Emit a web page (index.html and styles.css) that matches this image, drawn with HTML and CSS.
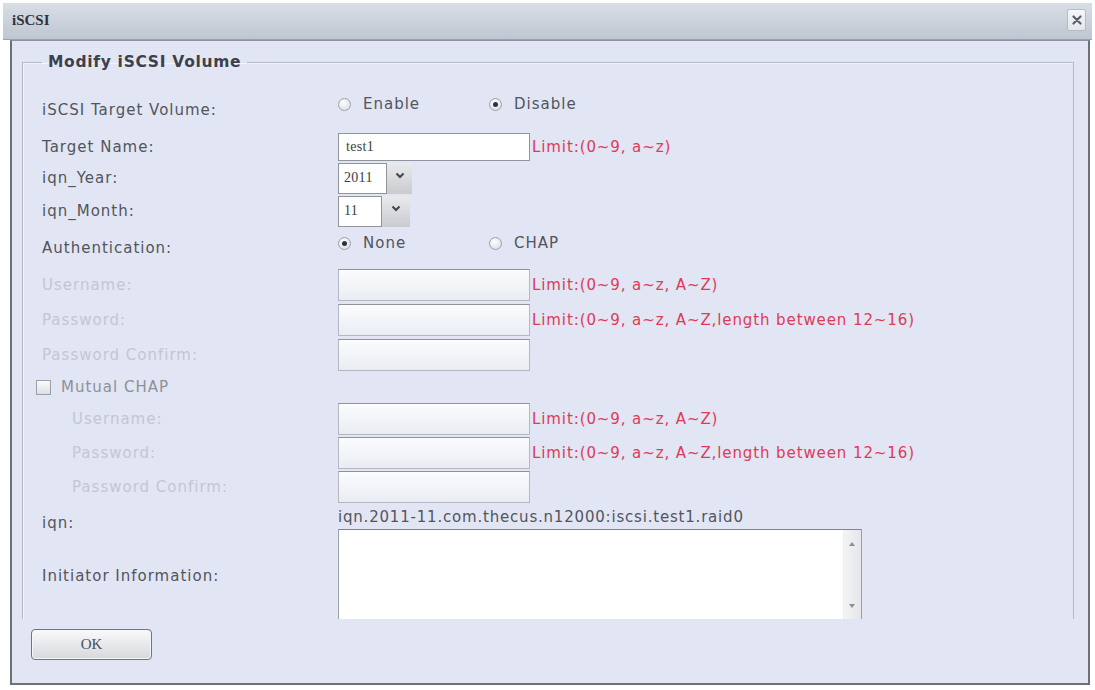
FILE: index.html
```html
<!DOCTYPE html>
<html lang="en">
<head>
    <meta charset="UTF-8">
    <title>iSCSI</title>
    <link rel="stylesheet" href="styles.css">
</head>
<body>
    <div class="window">
        <div class="titlebar">
            <span class="title">iSCSI</span>
            <span class="close">
                <svg width="10" height="10" viewBox="0 0 10 10"><path d="M1.5 1.5 L8.5 8.5 M8.5 1.5 L1.5 8.5" stroke="#5a5f68" stroke-width="2.2" stroke-linecap="round"/></svg>
            </span>
        </div>
        <div class="panel">
            <div class="scroll">
                <fieldset class="group">
                    <legend>Modify iSCSI Volume</legend>

                    <div class="row r-vol">
                        <div class="label">iSCSI Target Volume:</div>
                        <div class="control radios">
                            <span class="radio"><i class="dot"></i>Enable</span>
                            <span class="radio"><i class="dot on"></i>Disable</span>
                        </div>
                    </div>

                    <div class="row r-name">
                        <div class="label">Target Name:</div>
                        <div class="control">
                            <span class="input active">test1</span>
                            <span class="limit">Limit:(0~9, a~z)</span>
                        </div>
                    </div>

                    <div class="row r-year">
                        <div class="label">iqn_Year:</div>
                        <div class="control">
                            <span class="select"><span class="value year">2011</span><span class="drop"><svg width="10" height="7" viewBox="0 0 10 7"><path d="M1.5 1.5 L5 5 L8.5 1.5" fill="none" stroke="#444" stroke-width="2"/></svg></span></span>
                        </div>
                    </div>

                    <div class="row r-month">
                        <div class="label">iqn_Month:</div>
                        <div class="control">
                            <span class="select"><span class="value month">11</span><span class="drop wide"><svg width="10" height="7" viewBox="0 0 10 7"><path d="M1.5 1.5 L5 5 L8.5 1.5" fill="none" stroke="#444" stroke-width="2"/></svg></span></span>
                        </div>
                    </div>

                    <div class="row r-auth">
                        <div class="label">Authentication:</div>
                        <div class="control radios">
                            <span class="radio"><i class="dot on"></i>None</span>
                            <span class="radio"><i class="dot"></i>CHAP</span>
                        </div>
                    </div>

                    <div class="row r-field">
                        <div class="label off">Username:</div>
                        <div class="control">
                            <span class="input"></span>
                            <span class="limit">Limit:(0~9, a~z, A~Z)</span>
                        </div>
                    </div>

                    <div class="row r-field tall">
                        <div class="label off">Password:</div>
                        <div class="control">
                            <span class="input"></span>
                            <span class="limit">Limit:(0~9, a~z, A~Z,length between 12~16)</span>
                        </div>
                    </div>

                    <div class="row r-field">
                        <div class="label off">Password Confirm:</div>
                        <div class="control">
                            <span class="input"></span>
                        </div>
                    </div>

                    <div class="row r-mutual">
                        <span class="check"></span>
                        <span class="check-label">Mutual CHAP</span>
                    </div>

                    <div class="row r-field">
                        <div class="label off sub">Username:</div>
                        <div class="control">
                            <span class="input"></span>
                            <span class="limit">Limit:(0~9, a~z, A~Z)</span>
                        </div>
                    </div>

                    <div class="row r-field">
                        <div class="label off sub">Password:</div>
                        <div class="control">
                            <span class="input"></span>
                            <span class="limit">Limit:(0~9, a~z, A~Z,length between 12~16)</span>
                        </div>
                    </div>

                    <div class="row r-field">
                        <div class="label off sub">Password Confirm:</div>
                        <div class="control">
                            <span class="input"></span>
                        </div>
                    </div>

                    <div class="row r-iqn">
                        <div class="label">iqn:</div>
                        <div class="control iqn">iqn.2011-11.com.thecus.n12000:iscsi.test1.raid0</div>
                    </div>

                    <div class="row r-init">
                        <div class="label">Initiator Information:</div>
                        <div class="control">
                            <div class="textarea">
                                <div class="scrollbar">
                                    <span class="arrow up"></span>
                                    <span class="arrow down"></span>
                                </div>
                            </div>
                        </div>
                    </div>
                </fieldset>
            </div>
            <div class="actions">
                <span class="btn">OK</span>
            </div>
        </div>
    </div>
</body>
</html>
```

FILE: styles.css
```css
body {
    margin: 0;
    background: #ffffff;
    font-family: 'DejaVu Sans', Verdana, sans-serif;
    font-size: 15px;
    letter-spacing: 1px;
    color: #51555d;
}
.window {
    margin: 3px 3px 0 3px;
}
.titlebar {
    height: 36px;
    display: flex;
    align-items: center;
    justify-content: space-between;
    padding: 0 6px 0 9px;
    background: linear-gradient(#d9dee6 0%, #cad1db 55%, #bec6d1 100%);
    border-bottom: 1px solid #9aa2ae;
}
.title {
    font-family: 'Liberation Serif', 'Times New Roman', serif;
    font-weight: bold;
    font-size: 15px;
    letter-spacing: 0;
    color: #2f343c;
    margin-top: -2px;
}
.close {
    width: 17px;
    height: 20px;
    display: flex;
    align-items: center;
    justify-content: center;
    background: linear-gradient(#f4f6f9, #e3e7ed);
    border: 1px solid #b6bcc6;
    border-radius: 2px;
    margin-top: -2px;
}
.panel {
    margin: 0 2px 0 7px;
    height: 645px;
    box-sizing: border-box;
    background: #e2e5f3;
    border: 2px solid #6c707a;
    border-top: 1px solid #8d939e;
}
.scroll {
    height: 578px;
    overflow: hidden;
    padding: 12px 14px 0 10px;
    box-sizing: border-box;
}
.group {
    margin: 0;
    padding: 18px 14px 0 19px;
    border: 1px solid #b4b9c6;
    box-shadow: inset 1px 1px 0 #f3f4fa;
    min-height: 700px;
}
.group legend {
    padding: 0 6px;
    font-weight: bold;
    font-size: 15.5px;
    letter-spacing: 0.7px;
    color: #3c414b;
}
.row {
    display: flex;
    align-items: center;
}
.label {
    width: 296px;
    flex-shrink: 0;
}
.label.off {
    color: #c3c7d1;
}
.label.sub {
    padding-left: 30px;
    box-sizing: border-box;
}
.control {
    display: flex;
    align-items: center;
}

/* row heights */
.r-vol { height: 42px; }
.r-vol .control { align-self: flex-start; margin-top: 6px; }
.r-name { height: 31px; }
.r-year { height: 32px; }
.r-month { height: 34px; }
.r-auth { height: 40px; }
.r-auth .control { margin-bottom: 10px; }
.r-field { height: 34px; }
.r-field.tall { height: 36px; }
.r-mutual { height: 30px; }
.r-iqn { height: 25px; align-items: flex-end; }
.r-iqn .iqn { align-self: flex-start; margin-top: 4px; letter-spacing: 0.8px; }
.r-iqn .label { margin-bottom: -3px; }
.r-init { align-items: center; height: 94px; }

.radios .radio {
    display: flex;
    align-items: center;
    width: 151px;
}
.dot {
    width: 11px;
    height: 11px;
    border: 1px solid #9ca1ab;
    border-radius: 50%;
    background: radial-gradient(circle at 40% 35%, #ffffff, #d3d7df);
    margin-right: 12px;
    position: relative;
}
.dot.on::after {
    content: "";
    position: absolute;
    left: 3px;
    top: 3px;
    width: 5px;
    height: 5px;
    border-radius: 50%;
    background: #2e333a;
}
.input {
    width: 192px;
    height: 30px;
    box-sizing: border-box;
    border: 1px solid #b3b8c2;
    border-top-color: #8d929c;
    background: linear-gradient(#fbfcfd, #e9edf3);
    display: flex;
    align-items: center;
    padding-left: 7px;
}
.input.active {
    height: 28px;
    background: #ffffff;
    border-color: #8f949d;
    font-family: 'Liberation Serif', 'Times New Roman', serif;
    font-size: 14px;
    letter-spacing: 0.3px;
    color: #3a3e45;
}
.r-field .input { height: 32px; }
.limit {
    color: #de3b57;
    margin-left: 2px;
    letter-spacing: 0.9px;
}
.select {
    display: flex;
    height: 31px;
}
.select .value {
    box-sizing: border-box;
    background: #ffffff;
    border: 1px solid #8f949d;
    font-family: 'Liberation Serif', 'Times New Roman', serif;
    font-size: 14px;
    letter-spacing: 0.3px;
    color: #3a3e45;
    display: flex;
    align-items: center;
    padding-left: 5px;
}
.value.year { width: 49px; }
.value.month { width: 44px; }
.drop {
    width: 25px;
    background: linear-gradient(#e9eaec, #c9cbcf);
    display: flex;
    justify-content: center;
    padding-top: 9px;
    box-sizing: border-box;
}
.drop.wide { width: 28px; }
.check {
    width: 13px;
    height: 13px;
    border: 1px solid #9a9fa8;
    background: linear-gradient(#fbfbfc, #dcdfe5);
    margin-left: -6px;
    margin-right: 10px;
}
.check-label {
    color: #8d919a;
}
.textarea {
    width: 524px;
    height: 94px;
    box-sizing: border-box;
    background: #ffffff;
    border: 1px solid #9a9fa8;
    border-top-color: #7f848e;
    display: flex;
    justify-content: flex-end;
}
.scrollbar {
    width: 17px;
    background: linear-gradient(90deg, #f3f4f6, #e4e6ea);
    border-left: 1px solid #eceef1;
    position: relative;
}
.arrow {
    position: absolute;
    left: 5px;
    width: 0;
    height: 0;
    border-left: 3px solid transparent;
    border-right: 3px solid transparent;
}
.arrow.up {
    top: 12px;
    border-bottom: 4px solid #8a8e96;
}
.arrow.down {
    top: 74px;
    border-top: 4px solid #8a8e96;
}
.actions {
    padding: 10px 0 0 19px;
}
.btn {
    width: 121px;
    height: 31px;
    box-sizing: border-box;
    display: flex;
    align-items: center;
    justify-content: center;
    border: 1px solid #70757e;
    border-radius: 4px;
    background: linear-gradient(#fafafa, #e4e5e8 60%, #d7d9dd);
    box-shadow: inset 0 0 0 1px #f4f5f7;
    font-family: 'Liberation Serif', 'Times New Roman', serif;
    font-size: 15px;
    letter-spacing: 0;
    color: #4a4e55;
}
```
